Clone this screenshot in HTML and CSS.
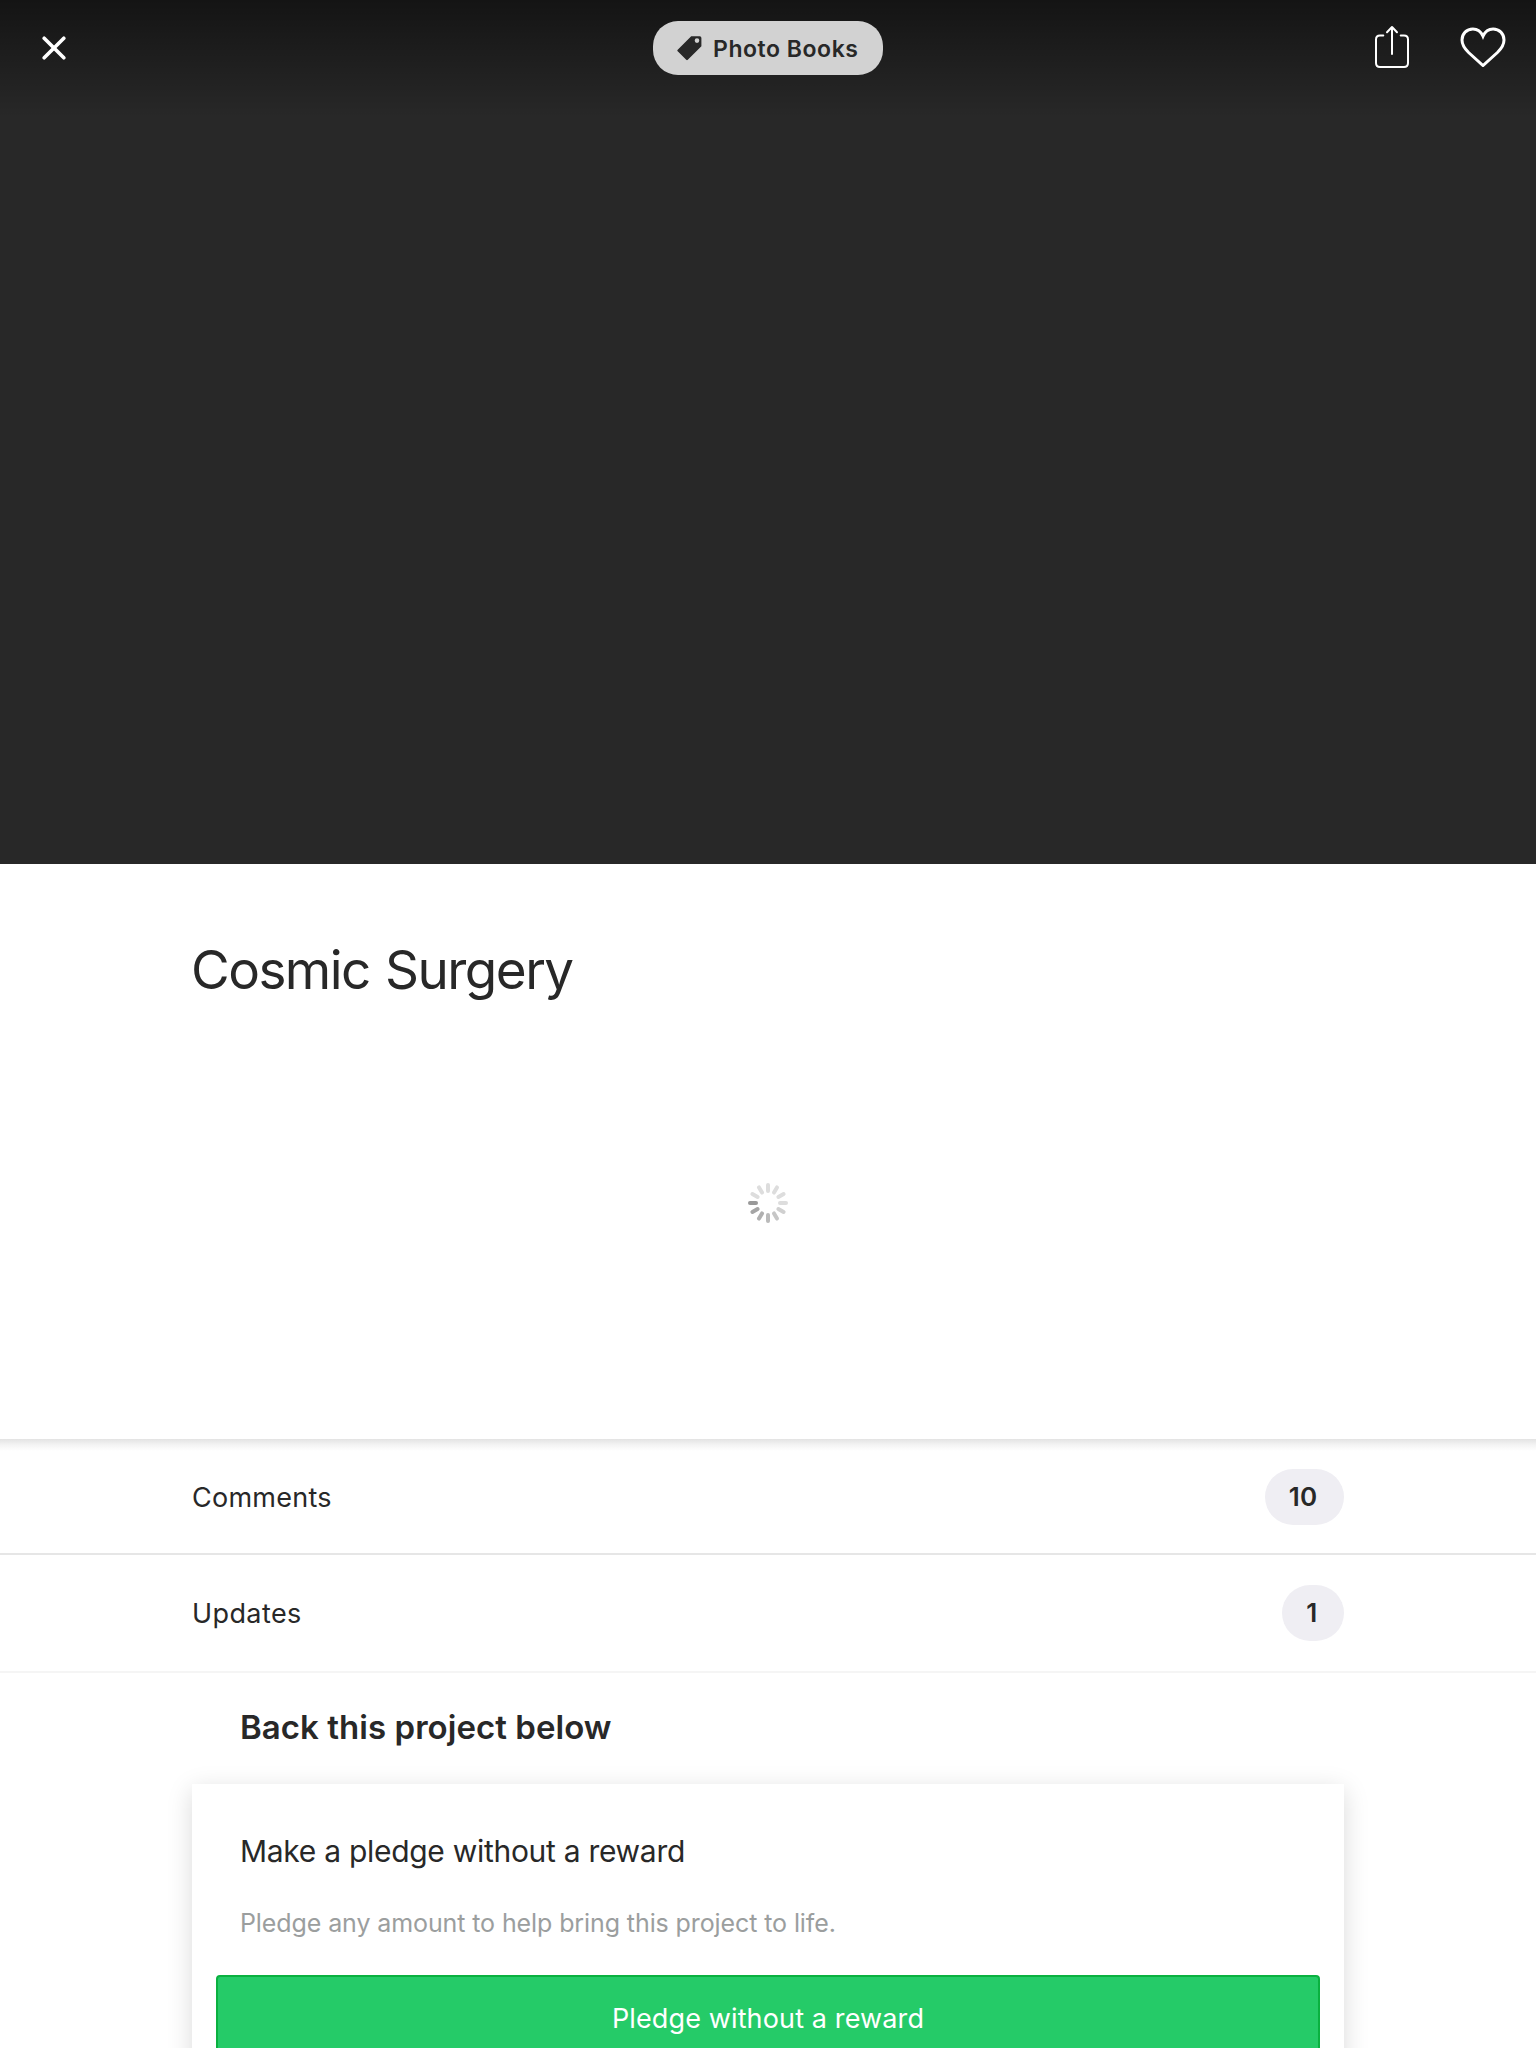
FILE: index.html
```html
<!DOCTYPE html>
<html lang="en">
<head>
<meta charset="utf-8">
<title>Cosmic Surgery</title>
<link rel="stylesheet" href="styles.css">
</head>
<body>
<main class="page">
  <header class="hero">
    <nav class="toolbar">
      <button class="icon-button close" aria-label="Close">
        <svg width="24" height="24" viewBox="0 0 24 24"><path d="M2.2 2.2 21.8 21.8M21.8 2.2 2.2 21.8"/></svg>
      </button>
      <a class="category">
        <svg class="tag" width="25" height="25" viewBox="0 0 25 25"><path fill-rule="evenodd" d="M14.2.3H22.8Q24.4.3 24.4 1.900V10.300L10.800 23.800Q10 24.600 9.200 23.800L.700 15.300Q-.100 14.500.700 13.700ZM20 2.300A2.300 2.300 0 1 0 20 6.900 2.300 2.300 0 1 0 20 2.300Z"/></svg>
        <span class="category-name">Photo Books</span>
      </a>
      <div class="actions">
        <button class="icon-button" aria-label="Share">
          <svg class="share" width="36" height="44" viewBox="0 0 36 44"><path d="M9.300 10.500H6Q2 10.500 2 14.500V38Q2 42 6 42H30Q34 42 34 38V14.500Q34 10.500 30 10.500H26.700M18 29V2.500M13 7.200 18 2 23 7.200"/></svg>
        </button>
        <button class="icon-button" aria-label="Save">
          <svg class="heart" width="46" height="40" viewBox="0 0 46 40"><path d="M23 9.200C20.900 4.500 17.300 2 12.900 2 6.600 2 2 6.700 2 13 2 18.200 4.600 21.600 8.600 25.500L23 38.500 37.400 25.500C41.400 21.600 44 18.200 44 13 44 6.700 39.400 2 33.100 2 28.700 2 25.100 4.500 23 9.200Z"/></svg>
        </button>
      </div>
    </nav>
  </header>

  <section class="summary">
    <h1 class="title">Cosmic Surgery</h1>
    <svg class="spinner" width="40" height="40" viewBox="-20 -20 40 40">
      <path stroke="#dddddd" d="M0-12V-18"/>
      <path stroke="#dddddd" d="M0-12V-18" transform="rotate(30)"/>
      <path stroke="#dddddd" d="M0-12V-18" transform="rotate(60)"/>
      <path stroke="#dddddd" d="M0-12V-18" transform="rotate(90)"/>
      <path stroke="#d0d0d0" d="M0-12V-18" transform="rotate(120)"/>
      <path stroke="#c6c6c6" d="M0-12V-18" transform="rotate(150)"/>
      <path stroke="#bababa" d="M0-12V-18" transform="rotate(180)"/>
      <path stroke="#b0b0b0" d="M0-12V-18" transform="rotate(210)"/>
      <path stroke="#a5a5a5" d="M0-12V-18" transform="rotate(240)"/>
      <path stroke="#999999" d="M0-12V-18" transform="rotate(270)"/>
      <path stroke="#dddddd" d="M0-12V-18" transform="rotate(300)"/>
      <path stroke="#dddddd" d="M0-12V-18" transform="rotate(330)"/>
    </svg>
  </section>

  <section class="links">
    <a class="row comments"><span>Comments</span><span class="count">10</span></a>
    <a class="row updates"><span>Updates</span><span class="count">1</span></a>
  </section>

  <section class="rewards">
    <h2 class="rewards-title">Back this project below</h2>
    <article class="card">
      <h3 class="card-title">Make a pledge without a reward</h3>
      <p class="card-text">Pledge any amount to help bring this project to life.</p>
      <button class="pledge">Pledge without a reward</button>
    </article>
  </section>
</main>
</body>
</html>
```
FILE: styles.css
```css
* { box-sizing: border-box; }

body {
  margin: 0;
  background: #fff;
  color: #282828;
  font-family: Inter, "Liberation Sans", sans-serif;
}

h1, h2, h3, p { margin: 0; font-weight: 400; }

button { border: 0; padding: 0; background: none; font: inherit; }

svg { display: block; }

.page {
  width: 100%;
  height: 2048px;
  overflow: hidden;
}

.hero {
  height: 864px;
  background: #282828 linear-gradient(rgba(0, 0, 0, .5), transparent) no-repeat 0 0 / 100% 118px;
}

.toolbar {
  display: grid;
  grid-template-columns: 1fr auto 1fr;
  align-items: center;
  height: 96px;
  padding: 0 30px;
}

.icon-button path {
  fill: none;
  stroke: #fff;
  stroke-linecap: round;
  stroke-linejoin: round;
}

.close { padding-left: 12px; }
.close path { stroke-width: 3.6; }
.share path { stroke-width: 2; }
.heart path { stroke-width: 3; stroke-linejoin: miter; }

.category {
  display: flex;
  align-items: center;
  gap: 11px;
  width: 230px;
  height: 54px;
  padding-left: 24px;
  border-radius: 25px;
  background: #d2d2d2;
  font-size: 23px;
  font-weight: 600;
  letter-spacing: .54px;
  white-space: nowrap;
}

.category-name { padding-top: 2px; }

.tag { fill: #282828; }

.actions {
  display: flex;
  align-items: center;
  justify-content: flex-end;
  gap: 50px;
  padding-bottom: 2px;
}

.summary {
  height: 575px;
  padding: 74px 192px 0;
}

.title {
  margin-left: -1px;
  font-size: 53px;
  line-height: 64px;
  letter-spacing: -1.55px;
  word-spacing: 2px;
}

.spinner {
  margin: 181px auto 0;
  fill: none;
  stroke-width: 4;
  stroke-linecap: round;
}

.row {
  display: flex;
  align-items: center;
  justify-content: space-between;
  height: 118px;
  padding: 0 192px;
  border-bottom: 2px solid #f5f5f5;
  font-size: 27px;
}

.comments {
  height: 116px;
  padding-top: 2px;
  border-color: #e6e6e6;
  background: linear-gradient(#e3e3e3, #f4f4f4 6px, #fff 12px);
  letter-spacing: .27px;
}

.updates { letter-spacing: .4px; }

.count {
  padding: 0 26.6px 0 24px;
  border-radius: 28px;
  background: #efeef3;
  font-size: 26px;
  font-weight: 600;
  line-height: 56px;
  letter-spacing: .2px;
}

.rewards { padding: 34px 192px 0; }

.rewards-title {
  padding-left: 48px;
  font-size: 33px;
  font-weight: 600;
  line-height: 40px;
  letter-spacing: .05px;
}

.card {
  margin-top: 37px;
  height: 400px;
  padding: 47px 24px 0;
  background: #fff;
  box-shadow: 0 6px 24px rgba(0, 0, 0, .15);
}

.card-title {
  padding-left: 24px;
  font-size: 30px;
  line-height: 40px;
  letter-spacing: -.29px;
}

.card-text {
  margin-top: 34px;
  padding-left: 24px;
  color: #9b9e9e;
  font-size: 25px;
  line-height: 36px;
  letter-spacing: -.1px;
}

.pledge {
  display: block;
  width: 100%;
  height: 87px;
  margin-top: 34px;
  border: 2px solid #0ab140;
  border-radius: 4px;
  background: #25cb68;
  color: #fff;
  font-size: 27px;
  letter-spacing: .13px;
}
```
